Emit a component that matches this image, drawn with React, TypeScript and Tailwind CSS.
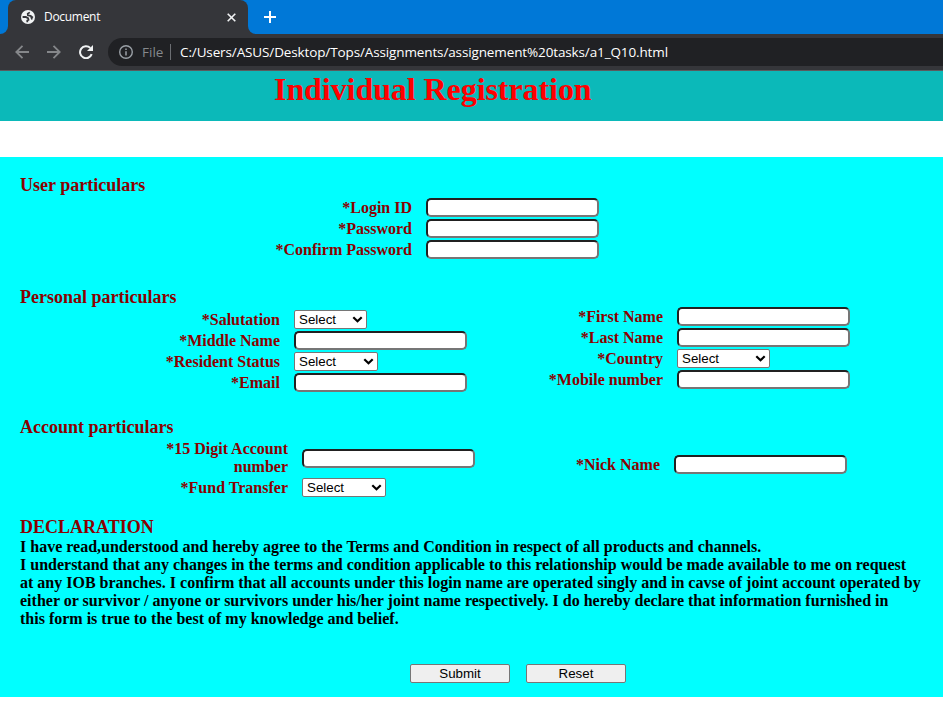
import type { ReactNode } from "react";

const inputClass =
  "block h-[19px] w-[173px] rounded-[5px] border-2 border-t-[#212121] border-l-[#212121] border-r-[#767676] border-b-[#767676] bg-white px-1 font-['Liberation_Sans',Arial,sans-serif] text-[13.33px] outline-none";

function TextInput({ type = "text" }: { type?: string }) {
  return <input type={type} className={inputClass} />;
}

function Select({ width }: { width: string }) {
  return (
    <span className={`relative block h-[19px] ${width}`}>
      <select className="block h-[19px] w-full appearance-none rounded-[2px] border border-[#767676] bg-white pl-1 font-['Liberation_Sans',Arial,sans-serif] text-[13.33px] leading-[17px] font-normal text-black">
        <option>Select</option>
      </select>
      <svg
        className="pointer-events-none absolute top-[6px] right-[4px] h-[7px] w-[11px]"
        viewBox="0 0 11 7"
        fill="none"
        stroke="#000"
        strokeWidth="2.2"
      >
        <path d="M1.3 1.2 5.5 5.2 9.7 1.2" />
      </svg>
    </span>
  );
}

function Field({ label, children }: { label: ReactNode; children: ReactNode }) {
  return (
    <div className="flex items-center gap-[14px]">
      <label className="flex-1 text-right leading-[19px] whitespace-nowrap">{label}</label>
      <div className="w-[173px]">{children}</div>
    </div>
  );
}

function Heading({ children }: { children: ReactNode }) {
  return <h2 className="h-5 text-[18px] leading-[18px]">{children}</h2>;
}

function BrowserChrome() {
  return (
    <div className="font-['Open_Sans','Noto_Sans',sans-serif] text-white">
      <div className="flex h-[34px] bg-[#0078d7]">
        <div className="w-2 bg-[#35363a]">
          <div className="h-full w-2 rounded-br-lg bg-[#0078d7]" />
        </div>
        <div className="flex h-[34px] w-60 items-center rounded-t-lg bg-[#35363a] pr-3 pl-[13px]">
          <svg className="h-[14px] w-[14px]" viewBox="0 0 14 14">
            <circle cx="7" cy="7" r="7" fill="#f1f3f4" />
            <path
              d="M8.800 2.400 6.700 3.700 6.900 5.400 9.600 5.900 12 7.600M10 6.500 11 9.500"
              fill="none"
              stroke="#35363a"
              strokeWidth="1.7"
            />
            <path
              d="M1.600 7H4.800L7 8.200 7.500 9.800 6.300 10.500V12.300"
              fill="none"
              stroke="#35363a"
              strokeWidth="1.8"
            />
          </svg>
          <span className="ml-[9px] flex-1 text-[12px] leading-4 tracking-[-0.3px]">Document</span>
          <svg className="h-[9px] w-[9px]" viewBox="0 0 9 9" stroke="#f1f3f4" strokeWidth="1.6">
            <path d="M.7.7 8.300 8.300M8.300.7.7 8.300" />
          </svg>
        </div>
        <div className="w-2 bg-[#35363a]">
          <div className="h-full w-2 rounded-bl-lg bg-[#0078d7]" />
        </div>
        <div className="flex items-center pl-2">
          <svg className="h-3 w-3" viewBox="0 0 12 12" stroke="#fff" strokeWidth="2">
            <path d="M6 0v12M0 6h12" />
          </svg>
        </div>
      </div>
      <div className="flex h-[37px] items-start border-b border-[#5a5b5e] bg-[#35363a] pt-1">
        <div className="flex h-7 items-center pl-[15px]">
          <svg className="h-[14px] w-[14px]" viewBox="0 0 14 14" fill="none" stroke="#85878a" strokeWidth="1.8">
            <path d="M14 7H1.500M7.500.8 1.300 7l6.200 6.200" />
          </svg>
          <svg className="ml-[18px] h-[14px] w-[14px]" viewBox="0 0 14 14" fill="none" stroke="#85878a" strokeWidth="1.8">
            <path d="M0 7h12.500M6.500.8 12.700 7l-6.200 6.200" />
          </svg>
          <svg className="ml-[18px] h-[14px] w-[14px]" viewBox="0 0 14 14">
            <path d="M12.700 9.200A6 6 0 1 1 11.300 2.900" fill="none" stroke="#f1f3f4" strokeWidth="2" />
            <path d="M14 0v6H8Z" fill="#f1f3f4" />
          </svg>
        </div>
        <div className="ml-[15px] flex h-7 flex-1 items-center rounded-l-full bg-[#202124] pl-[11px] text-[13.5px] whitespace-nowrap">
          <svg className="h-[14px] w-[14px]" viewBox="0 0 14 14" fill="none" stroke="#9aa0a6">
            <circle cx="7" cy="7" r="6.300" strokeWidth="1.400" />
            <path d="M7 6.200v4.300M7 3.500v1.500" strokeWidth="1.500" />
          </svg>
          <span className="ml-[9px] w-[22px] text-[#85898d]">File</span>
          <span className="ml-[6px] h-4 w-px bg-[#6b6e72]" />
          <span className="ml-[9px] tracking-[-0.125px]">
            C:/Users/ASUS/Desktop/Tops/Assignments/assignement%20tasks/a1_Q10.html
          </span>
        </div>
      </div>
    </div>
  );
}

const buttonClass =
  "h-[19px] w-[100px] rounded-[2px] border border-[#767676] bg-[#efefef] font-['Liberation_Sans',Arial,sans-serif] text-[13.33px] leading-[17px] font-normal text-black";

export default function App() {
  return (
    <div className="h-[702px] w-[943px] overflow-hidden bg-white font-['Liberation_Serif','Times_New_Roman',serif]">
      <BrowserChrome />
      <header className="h-[50px] bg-[#0bb9b9] pt-px pl-[274px]">
        <h1 className="text-[32px] leading-[34px] font-bold tracking-[-0.07px] text-[#ff0000]">
          Individual Registration
        </h1>
      </header>
      <form
        className="mt-9 h-[540px] bg-[#00ffff] px-5 pt-[19px] text-[16px] font-bold text-[#8b0000]"
        onSubmit={(e) => e.preventDefault()}
      >
        <section className="h-28">
          <Heading>User particulars</Heading>
          <div className="mt-[2px] flex w-[579px] flex-col gap-[2px]">
            <Field label="*Login ID"><TextInput /></Field>
            <Field label="*Password"><TextInput type="password" /></Field>
            <Field label="*Confirm Password"><TextInput type="password" /></Field>
          </div>
        </section>

        <section className="h-[130px]">
          <Heading>Personal particulars</Heading>
          <div className="flex">
            <div className="mt-[2px] flex w-[447px] flex-col gap-[2px]">
              <Field label="*Salutation"><Select width="w-[73px]" /></Field>
              <Field label="*Middle Name"><TextInput /></Field>
              <Field label="*Resident Status"><Select width="w-[84px]" /></Field>
              <Field label="*Email"><TextInput /></Field>
            </div>
            <div className="-mt-px flex w-[383px] flex-col gap-[2px]">
              <Field label="*First Name"><TextInput /></Field>
              <Field label="*Last Name"><TextInput /></Field>
              <Field label="*Country"><Select width="w-[93px]" /></Field>
              <Field label="*Mobile number"><TextInput /></Field>
            </div>
          </div>
        </section>

        <section className="h-[99px]">
          <Heading>Account particulars</Heading>
          <div className="flex">
            <div className="mt-[2px] flex w-[455px] flex-col gap-[2px]">
              <Field
                label={
                  <span className="block leading-[18px]">
                    *15 Digit Account
                    <br />
                    number
                  </span>
                }
              >
                <TextInput />
              </Field>
              <Field label="*Fund Transfer"><Select width="w-[84px]" /></Field>
            </div>
            <div className="mt-[17px] w-[372px]">
              <Field label="*Nick Name"><TextInput /></Field>
            </div>
          </div>
        </section>

        <section className="pt-px">
          <Heading>DECLARATION</Heading>
          <p className="leading-[18px] whitespace-nowrap text-black">
            I have read,understood and hereby agree to the Terms and Condition in respect of all products and channels.
            <br />
            I understand that any changes in the terms and condition applicable to this relationship would be made available to me on request
            <br />
            at any IOB branches. I confirm that all accounts under this login name are operated singly and in cavse of joint account operated by
            <br />
            either or survivor / anyone or survivors under his/her joint name respectively. I do hereby declare that information furnished in
            <br />
            this form is true to the best of my knowledge and belief.
          </p>
        </section>

        <div className="mt-9 flex gap-4 pl-[390px]">
          <button type="submit" className={buttonClass}>Submit</button>
          <button type="reset" className={buttonClass}>Reset</button>
        </div>
      </form>
    </div>
  );
}
